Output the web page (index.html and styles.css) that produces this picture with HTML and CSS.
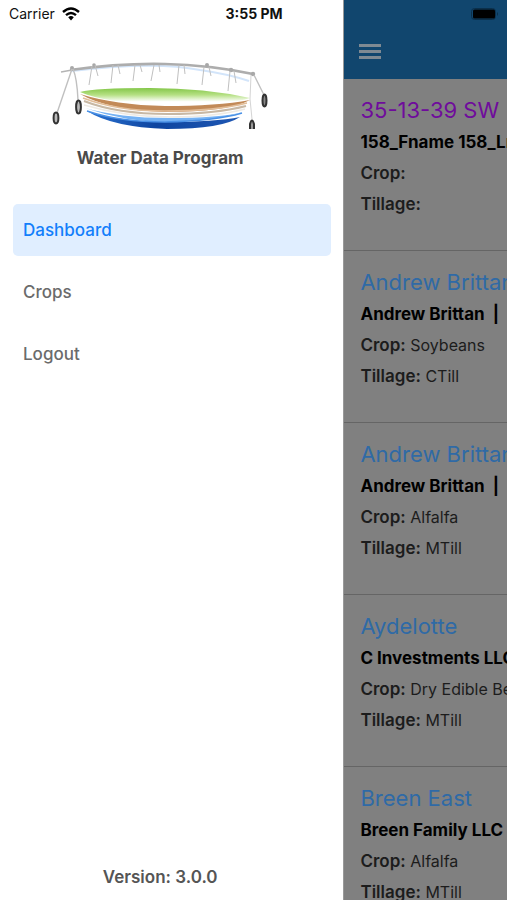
FILE: index.html
```html
<!DOCTYPE html>
<html lang="en">
  <head>
    <meta charset="UTF-8" />
    <meta name="viewport" content="width=device-width, initial-scale=1.0" />
    <title>Water Data Program</title>
    <link rel="stylesheet" href="styles.css">
  </head>
  <body>
    <div class="status-bar">
      <div class="carrier">
        <span>Carrier</span>
        <svg width="18" height="14" viewBox="0 0 18 14" fill="none" stroke="#000" stroke-width="2.4">
          <path d="M1 5 Q9 -2 17 5" />
          <path d="M4 8.2 Q9 3.8 14 8.2" />
          <path d="M6.2 10.2 Q9 8 11.8 10.2 L9 13.6 Z" fill="#000" stroke="none" />
        </svg>
      </div>
      <span class="time">3:55 PM</span>
      <svg class="battery" width="28" height="12" viewBox="0 0 28 12">
        <rect x="0.5" y="0.5" width="24" height="11" rx="3" fill="none" stroke="#0b2f4a" />
        <rect x="2" y="1.5" width="22" height="9" rx="1.5" fill="#000" />
        <path d="M26 4 Q28 6 26 8 Z" fill="#0b2f4a" />
      </svg>
    </div>

    <div class="app">
      <aside class="drawer">
        <div class="brand">
          <svg class="logo" width="222" height="76" viewBox="49 56 222 76" fill="none">
            <defs>
              <linearGradient id="green" x1="0" y1="0" x2="0" y2="1">
                <stop offset="0" stop-color="#83c648" />
                <stop offset="0.4" stop-color="#b5e083" />
                <stop offset="0.8" stop-color="#ffffff" />
              </linearGradient>
              <linearGradient id="deep" x1="0" y1="0" x2="1" y2="0">
                <stop offset="0" stop-color="#2c73d2" />
                <stop offset="0.45" stop-color="#0d449f" />
                <stop offset="1" stop-color="#1f58b4" />
              </linearGradient>
            </defs>
            <!-- pivot pipe -->
            <path d="M72 71 Q155 61 200 70 Q228 74 249 81" stroke="#d3e5fa" stroke-width="2" />
            <path d="M70 70 Q120 63 165 64 Q210 65 253 74" stroke="#adadad" stroke-width="2.6" />
            <path d="M61 72 L72 70" stroke="#b4b4b4" stroke-width="1.4" />
            <g fill="#a8a8a8">
              <circle cx="72" cy="68" r="2" />
              <circle cx="94" cy="65" r="1.8" />
              <circle cx="207" cy="65" r="2" />
              <circle cx="231" cy="70" r="2.2" />
              <circle cx="253" cy="74" r="2.2" />
            </g>
            <!-- drops -->
            <g stroke="#c0c0c0" stroke-width="1">
              <path d="M92 66 L89 85 M95 65 L98 76" />
              <path d="M113 65 L111 83 M118 65 L120 74" />
              <path d="M135 65 L133 81 M140 65 L142 72" />
              <path d="M154 65 L151 81 M159 65 L160 72" />
              <path d="M179 65 L177 84 M184 65 L185 74" />
              <path d="M204 67 L202 85 M209 67 L211 76" />
              <path d="M230 71 L228 91 M234 71 L236 83" />
            </g>
            <!-- towers -->
            <path d="M72 69 L57 113 M73 69 Q77 78 78 100" stroke="#c0c0c0" stroke-width="1.4" />
            <path d="M254 75 L264 95" stroke="#c0c0c0" stroke-width="1.4" />
            <path d="M251 75 L250 99 L252 119" stroke="#d4d4d4" stroke-width="1" />
            <!-- field layers -->
            <path d="M80 92 Q95 88 150 88 Q205 88 250 98 Q225 106 165 105 Q105 103 80 92 Z" fill="url(#green)" />
            <path d="M80 94 Q115 105 165 106 Q217 106 250 100 Q228 112 165 112 Q108 110 80 94 Z" fill="#c28a58" />
            <path d="M83 98 Q117 111 165 111 Q216 111 247 103" stroke="#e2bd98" stroke-width="1.4" />
            <path d="M84 101 Q117 114 168 114 Q215 114 246 106" stroke="#c8b8a4" stroke-width="2" />
            <path d="M84 105 Q125 117 170 117 Q215 117 245 109" stroke="#eeeae4" stroke-width="1.4" />
            <path d="M85 108 Q125 122 168 122 Q215 121 243 112 Q220 118 168 118 Q120 118 85 108 Z" fill="#75b2f4" />
            <path d="M87 111 Q120 122 165 122 Q215 122 240 117 Q222 129 167 129 Q112 127 87 111 Z" fill="url(#deep)" />
            <path d="M87 111 Q120 122 165 122 Q215 121 242 113" stroke="#4a91e6" stroke-width="1.4" />
            <!-- wheels -->
            <g stroke="#333333" stroke-width="2">
              <ellipse cx="56" cy="118" rx="2.4" ry="5.4" fill="#bbbbbb" />
              <ellipse cx="78.500" cy="107" rx="2.4" ry="6.4" fill="#bbbbbb" />
              <ellipse cx="264.500" cy="100.500" rx="2" ry="6" fill="#888888" />
              <path d="M250 129 V124 Q252 117 254 124 V129" fill="#999999" />
            </g>
          </svg>
          <h1>Water Data Program</h1>
        </div>
        <nav class="menu">
          <a href="#" class="active">Dashboard</a>
          <a href="#">Crops</a>
          <a href="#">Logout</a>
        </nav>
        <p class="version">Version: 3.0.0</p>
      </aside>

      <main class="screen">
        <header class="toolbar">
          <button type="button" aria-label="Menu">
            <svg width="22" height="16" viewBox="0 0 22 16" fill="#7f8a93">
              <rect width="22" height="3" y="0" />
              <rect width="22" height="3" y="6" />
              <rect width="22" height="3" y="12" />
            </svg>
          </button>
        </header>
        <div class="field">
          <h2 class="purple">35-13-39 SW</h2>
          <p class="owner">158_Fname 158_Lname</p>
          <p><b>Crop:</b></p>
          <p><b>Tillage:</b></p>
        </div>
        <div class="field">
          <h2>Andrew Brittan</h2>
          <p class="owner">Andrew Brittan &nbsp;|</p>
          <p><b>Crop:</b> Soybeans</p>
          <p><b>Tillage:</b> CTill</p>
        </div>
        <div class="field">
          <h2>Andrew Brittan</h2>
          <p class="owner">Andrew Brittan &nbsp;|</p>
          <p><b>Crop:</b> Alfalfa</p>
          <p><b>Tillage:</b> MTill</p>
        </div>
        <div class="field">
          <h2>Aydelotte</h2>
          <p class="owner">C Investments LLC</p>
          <p><b>Crop:</b> Dry Edible Beans</p>
          <p><b>Tillage:</b> MTill</p>
        </div>
        <div class="field">
          <h2>Breen East</h2>
          <p class="owner">Breen Family LLC</p>
          <p><b>Crop:</b> Alfalfa</p>
          <p><b>Tillage:</b> MTill</p>
        </div>
      </main>
    </div>
  </body>
</html>
```

FILE: styles.css
```css
* {
  box-sizing: border-box;
}
body {
  margin: 0;
  font-family: Inter, "Liberation Sans", sans-serif;
  font-size: 16px;
  color: #1c1c1c;
}
h1,
h2,
p {
  margin: 0;
}
.status-bar {
  position: absolute;
  top: 0;
  left: 0;
  width: 100%;
  height: 27px;
  padding: 0 8px 0 9px;
  display: grid;
  grid-template-columns: 1fr auto 1fr;
  align-items: center;
  font-size: 14px;
  color: #111;
}
.carrier {
  display: flex;
  align-items: center;
  gap: 7px;
}
.time {
  font-weight: 700;
}
.battery {
  justify-self: end;
}
.app {
  display: grid;
  grid-template-columns: minmax(0, 21fr) minmax(0, 10fr);
  height: 100vh;
}
.drawer {
  display: flex;
  flex-direction: column;
  padding: 56px 12px 8px 13px;
  background: #fff;
}
.brand {
  display: flex;
  flex-direction: column;
  align-items: center;
  gap: 14px;
  padding-right: 24px;
}
.brand h1 {
  font-size: 17px;
  line-height: 24px;
  font-weight: 700;
  color: #4a4a4a;
}
.menu {
  display: flex;
  flex-direction: column;
  gap: 10px;
  margin-top: 34px;
}
.menu a {
  padding: 0 10px;
  border-radius: 5px;
  font-size: 17px;
  line-height: 52px;
  font-weight: 500;
  color: #6b6b6b;
  text-decoration: none;
}
.menu .active {
  background: #e0eeff;
  color: #127efb;
}
.version {
  margin-top: auto;
  padding-right: 24px;
  text-align: center;
  font-size: 17px;
  line-height: 30px;
  font-weight: 600;
  color: #555;
}
.screen {
  overflow: hidden;
  background: #808080;
  border-left: 1px solid #999;
}
.toolbar {
  height: 79px;
  padding: 27px 15px 0;
  background: #11466e;
}
.toolbar button {
  display: flex;
  align-items: center;
  height: 50px;
  padding: 0;
  border: 0;
  background: none;
}
.field {
  padding: 14px 16px 30px;
  border-bottom: 1px solid #656565;
  white-space: nowrap;
}
.field h2 {
  font-size: 22px;
  line-height: 34px;
  font-weight: 400;
  color: #2f6aa6;
}
.field .purple {
  color: #6f0c9c;
}
.field p {
  line-height: 31px;
}
.field b {
  font-size: 17px;
  font-weight: 600;
}
.field .owner {
  font-size: 17px;
  font-weight: 700;
  color: #000;
}
```
